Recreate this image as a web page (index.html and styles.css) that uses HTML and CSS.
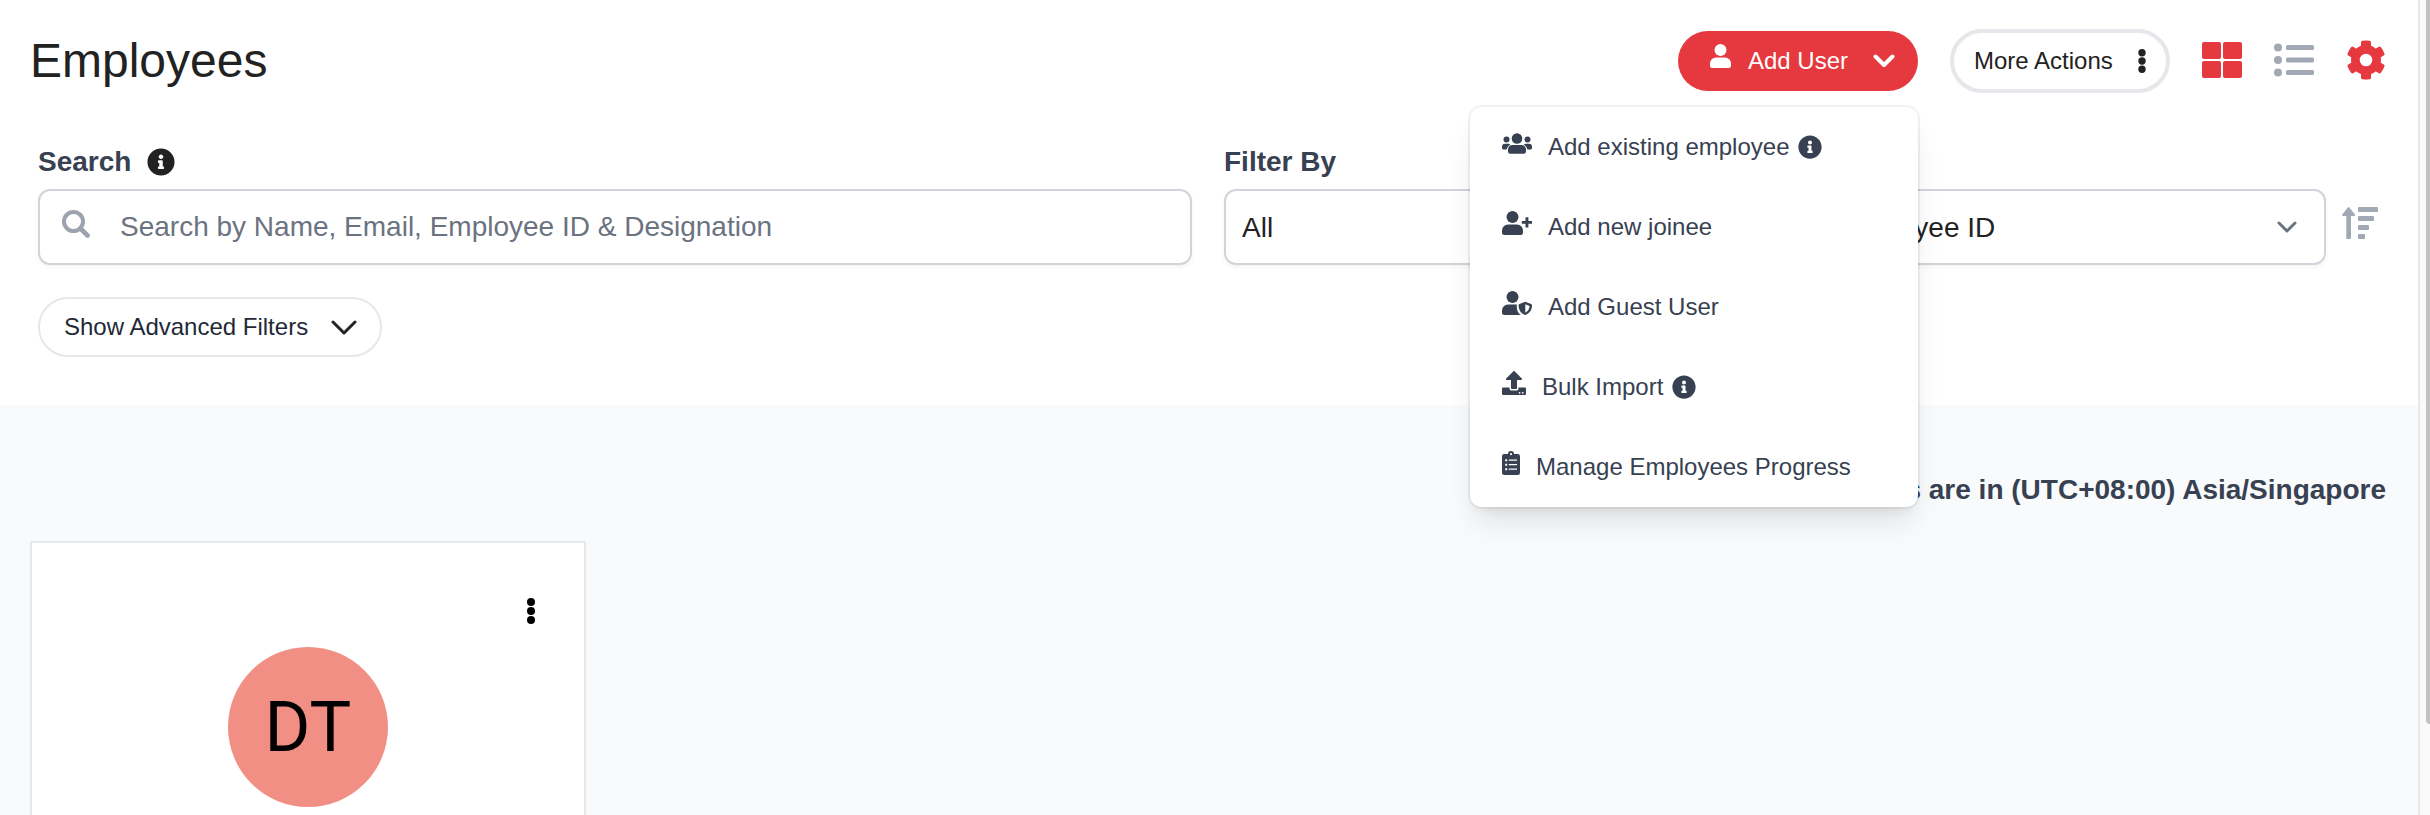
FILE: index.html
```html
<!DOCTYPE html>
<html lang="en">

<head>
    <meta charset="UTF-8">
    <title>Employees</title>
    <link rel="stylesheet" href="styles.css">
</head>
<body>
    <svg class="sprite" aria-hidden="true">
        <symbol id="info" viewBox="0 0 512 512">
            <path d="M256 8C119 8 8 119 8 256s111 248 248 248 248-111 248-248S393 8 256 8zm0 110c23.200 0 42 18.800 42 42s-18.800 42-42 42-42-18.800-42-42 18.800-42 42-42zm56 254c0 6.600-5.400 12-12 12h-88c-6.600 0-12-5.400-12-12v-24c0-6.600 5.400-12 12-12h12v-64h-12c-6.600 0-12-5.400-12-12v-24c0-6.600 5.400-12 12-12h64c6.600 0 12 5.400 12 12v100h12c6.600 0 12 5.400 12 12v24z"/>
        </symbol>
        <symbol id="dots" viewBox="0 0 8 26">
            <circle cx="4" cy="4" r="4"/><circle cx="4" cy="13" r="4"/><circle cx="4" cy="22" r="4"/>
        </symbol>
        <symbol id="chevron" viewBox="0 0 26 15">
            <path d="M2 2l11 11L24 2" fill="none" stroke="currentColor" stroke-width="3" stroke-linecap="round" stroke-linejoin="round"/>
        </symbol>
        <symbol id="chevron-small" viewBox="0 0 20 12">
            <path d="M2 2l8 8 8-8" fill="none" stroke="currentColor" stroke-width="3" stroke-linecap="round" stroke-linejoin="round"/>
        </symbol>
    </svg>

    <div class="page">
        <div class="content">
            <div class="top">
                <div class="header">
                    <h1>Employees</h1>
                    <div class="actions">
                        <div class="add">
                            <button class="btn btn-red" type="button">
                                <svg class="i-user" viewBox="0 0 21 24"><circle cx="10.500" cy="6" r="6"/><path d="M6 13.500h9a6 6 0 0 1 6 6v2.300A2.200 2.200 0 0 1 18.800 24H2.200A2.200 2.200 0 0 1 0 21.800v-2.300a6 6 0 0 1 6-6z"/></svg>
                                <span>Add User</span>
                                <svg class="i-down" viewBox="0 0 22 14"><path d="M2.500 2.500l8.500 8.500 8.500-8.500" fill="none" stroke="currentColor" stroke-width="4" stroke-linecap="round" stroke-linejoin="round"/></svg>
                            </button>
                            <div class="menu">
                                <a href="#">
                                    <svg class="w30" viewBox="0 0 30 24"><circle cx="15" cy="7.500" r="5.300"/><circle cx="4.500" cy="8.500" r="3"/><circle cx="25.500" cy="8.500" r="3"/><path d="M10.500 14h9a4.500 4.500 0 0 1 4.500 4.500v2a2.200 2.200 0 0 1-2.200 2.200H8.200A2.200 2.200 0 0 1 6 20.500v-2a4.500 4.500 0 0 1 4.500-4.500z"/><path d="M3 12.800h3c1 0 1.700.3 2.200.9A7 7 0 0 0 4.600 18.500H1.500A1.500 1.500 0 0 1 0 17v-1.200a3 3 0 0 1 3-3zM27 12.800h-3c-1 0-1.700.3-2.200.9a7 7 0 0 1 3.600 4.800h3.100A1.500 1.500 0 0 0 30 17v-1.200a3 3 0 0 0-3-3z"/></svg>
                                    <span>Add existing employee</span>
                                    <svg class="i-info"><use href="#info"/></svg>
                                </a>
                                <a href="#">
                                    <svg class="w30" viewBox="0 0 30 24"><circle cx="10.500" cy="6" r="6"/><path d="M6 13.500h9a6 6 0 0 1 6 6v2.300A2.200 2.200 0 0 1 18.800 24H2.200A2.200 2.200 0 0 1 0 21.800v-2.300a6 6 0 0 1 6-6z"/><path d="M23.500 6.200h2.900v3.700h3.600v2.900h-3.600v3.700h-2.900v-3.700h-3.700V9.900h3.700z"/></svg>
                                    <span>Add new joinee</span>
                                </a>
                                <a href="#">
                                    <svg class="w30" viewBox="0 0 30 24"><circle cx="10.500" cy="6" r="6"/><path d="M6 13.500h9.200l-.4.300v2.100c0 3 1.200 6.200 4 8.100H2.200A2.200 2.200 0 0 1 0 21.800v-2.300a6 6 0 0 1 6-6z"/><path fill-rule="evenodd" d="M23.200 10.700l5.900 2.400c.6.200.9.600.9 1.200 0 4.700-2.500 8-5.900 9.500-.6.200-1.100.2-1.700 0-3.500-1.500-5.800-5-5.800-9.500 0-.6.3-1 .9-1.200zM23.300 13.200v8.500c2.500-1.300 4.100-3.500 4.300-6.700z"/></svg>
                                    <span>Add Guest User</span>
                                </a>
                                <a href="#">
                                    <svg class="w24" viewBox="0 0 24 24"><path d="M13.900 18h-3.800c-.6 0-1.100-.5-1.100-1.100V9H4.900c-.8 0-1.300-1-.7-1.600L11.400.3c.3-.4.900-.4 1.200 0l7.200 7.100c.6.600.2 1.600-.7 1.600H15v7.900c0 .6-.5 1.100-1.100 1.100z"/><path fill-rule="evenodd" d="M7.500 16.500v.4a2.600 2.600 0 0 0 2.600 2.600h3.800a2.600 2.600 0 0 0 2.600-2.600v-.4h6.400c.6 0 1.100.5 1.100 1.100v5.300c0 .6-.5 1.100-1.100 1.100H1.100A1.100 1.100 0 0 1 0 22.900v-5.300c0-.6.5-1.100 1.100-1.100zM17.600 20.900a.9.900 0 1 0 0 1.800.9.900 0 0 0 0-1.800zM20.800 20.900a.9.900 0 1 0 0 1.800.9.900 0 0 0 0-1.800z"/></svg>
                                    <span>Bulk Import</span>
                                    <svg class="i-info"><use href="#info"/></svg>
                                </a>
                                <a href="#">
                                    <svg class="w18" viewBox="0 0 18 24"><path fill-rule="evenodd" d="M15.800 3H12a3 3 0 0 0-6 0H2.200A2.200 2.200 0 0 0 0 5.200v16.600A2.200 2.200 0 0 0 2.200 24h13.600a2.200 2.200 0 0 0 2.200-2.200V5.200A2.200 2.200 0 0 0 15.800 3zM9 2a1.100 1.100 0 1 1 0 2.200A1.100 1.100 0 0 1 9 2zM3.200 8.200h2v2h-2zM6.800 8.600H15v1.200H6.800zM3.200 12.700h2v2h-2zM6.800 13.100H15v1.200H6.800zM3.200 17.200h2v2h-2zM6.800 17.600H15v1.200H6.800z"/></svg>
                                    <span>Manage Employees Progress</span>
                                </a>
                            </div>
                        </div>
                        <button class="btn btn-more" type="button">
                            <span>More Actions</span>
                            <svg class="i-dots"><use href="#dots"/></svg>
                        </button>
                        <button class="icon red" type="button" aria-label="Grid view">
                            <svg width="40" height="36" viewBox="0 0 40 36"><rect width="19" height="17" rx="2"/><rect x="21" width="19" height="17" rx="2"/><rect y="19" width="19" height="17" rx="2"/><rect x="21" y="19" width="19" height="17" rx="2"/></svg>
                        </button>
                        <button class="icon grey" type="button" aria-label="List view">
                            <svg width="40" height="34" viewBox="0 0 40 34"><circle cx="4" cy="4.500" r="4"/><circle cx="4" cy="17" r="4"/><circle cx="4" cy="29.500" r="4"/><rect x="12" y="2" width="28" height="5" rx="1.500"/><rect x="12" y="14.500" width="28" height="5" rx="1.500"/><rect x="12" y="27" width="28" height="5" rx="1.500"/></svg>
                        </button>
                        <button class="icon red" type="button" aria-label="Settings">
                            <svg width="40" height="40" viewBox="0 0 40 40">
                                <path fill-rule="evenodd" d="M20 5a15 15 0 1 0 0 30 15 15 0 0 0 0-30zM20 13.700a6.300 6.300 0 1 1 0 12.600 6.300 6.300 0 0 1 0-12.600z"/>
                                <path id="tooth" d="M15 8V2.300Q15 .8 16.500.8Q20 .2 23.500.8Q25 .8 25 2.300V8z"/>
                                <use href="#tooth" transform="rotate(60 20 20)"/>
                                <use href="#tooth" transform="rotate(120 20 20)"/>
                                <use href="#tooth" transform="rotate(180 20 20)"/>
                                <use href="#tooth" transform="rotate(240 20 20)"/>
                                <use href="#tooth" transform="rotate(300 20 20)"/>
                            </svg>
                        </button>
                    </div>
                </div>

                <div class="filters">
                    <div class="field search">
                        <label for="search">Search <svg class="i-tip"><use href="#info"/></svg></label>
                        <div class="box">
                            <svg class="i-search" viewBox="0 0 28 28"><circle cx="11.500" cy="11.500" r="9.500" fill="none" stroke="currentColor" stroke-width="4"/><path d="M18.500 18.500l7 7" stroke="currentColor" stroke-width="4.600" stroke-linecap="round"/></svg>
                            <input type="text" id="search" placeholder="Search by Name, Email, Employee ID &amp; Designation">
                        </div>
                    </div>
                    <div class="field">
                        <label for="filter">Filter By</label>
                        <div class="box">
                            <select id="filter"><option>All</option></select>
                            <svg class="i-select"><use href="#chevron-small"/></svg>
                        </div>
                    </div>
                    <div class="field">
                        <label for="sort">Sort By</label>
                        <div class="sort">
                            <div class="box">
                                <select id="sort"><option>Employee ID</option></select>
                                <svg class="i-select"><use href="#chevron-small"/></svg>
                            </div>
                            <button class="icon grey" type="button" aria-label="Sort order">
                                <svg width="36" height="32" viewBox="0 0 36 32"><path d="M5.900.4a1 1 0 0 1 1.400 0l5.500 6.900c.6.700.1 1.700-.8 1.700H9v22a1 1 0 0 1-1 1H5.300a1 1 0 0 1-1-1V9H1.200C.3 9-.2 8 .4 7.300z"/><rect x="16" width="20" height="5" rx="1"/><rect x="16" y="9" width="16" height="5" rx="1"/><rect x="16" y="18" width="11" height="5" rx="1"/><rect x="16" y="27" width="7" height="5" rx="1"/></svg>
                            </button>
                        </div>
                    </div>
                </div>

                <button class="btn btn-adv" type="button">
                    <span>Show Advanced Filters</span>
                    <svg class="i-adv"><use href="#chevron"/></svg>
                </button>
            </div>

            <p class="zone">All times are in (UTC+08:00) Asia/Singapore</p>

            <div class="cards">
                <div class="card">
                    <button class="icon dots" type="button" aria-label="Employee actions">
                        <svg width="8" height="26"><use href="#dots"/></svg>
                    </button>
                    <div class="avatar">DT</div>
                </div>
            </div>
        </div>
        <div class="scrollbar"><div class="thumb"></div></div>
    </div>
</body>

</html>
```

FILE: styles.css
```css
* {
    box-sizing: border-box;
    margin: 0;
    padding: 0;
}

body {
    font-family: "Liberation Sans", Arial, sans-serif;
    font-size: 24px;
    color: #222;
    background: #fff;
    overflow: hidden;
}

svg {
    display: block;
    flex-shrink: 0;
    fill: currentColor;
}

button,
input,
select {
    font: inherit;
    color: inherit;
    background: none;
    border: 0;
    outline: 0;
}

.sprite {
    position: absolute;
    width: 0;
    height: 0;
}

.page {
    display: flex;
    height: 100vh;
}

.content {
    flex: 1;
    overflow: hidden;
    background: #f8fafc;
}

.top {
    padding: 29px 40px 48px 38px;
    background: #fff;
}

/* header */
.header {
    display: flex;
    align-items: center;
    justify-content: space-between;
    height: 64px;
    margin: 0 -8px 0 -8px;
}

h1 {
    font-size: 48px;
    font-weight: normal;
    line-height: 64px;
}

.actions {
    display: flex;
    align-items: center;
    gap: 32px;
}

.actions .icon {
    margin-bottom: 2px;
}

.btn {
    display: flex;
    align-items: center;
    height: 60px;
    border-radius: 32px;
}

.btn-red {
    gap: 17px;
    width: 240px;
    padding: 0 22px 0 32px;
    color: #fff;
    background: #e5393f;
}

.add .btn-red {
    margin-bottom: 1px;
}

.i-user {
    width: 21px;
    height: 24px;
    margin-bottom: 10px;
}

.i-down {
    width: 22px;
    height: 14px;
    margin-left: 8px;
}

.btn-more {
    justify-content: space-between;
    width: 220px;
    height: 64px;
    padding: 0 20px;
    border: 4px solid #e5e7eb;
}

.i-dots {
    width: 8px;
    height: 24px;
}

.icon {
    display: flex;
}

.red {
    color: #e5393f;
}

.grey {
    color: #a3a9b4;
}

/* dropdown under Add User */
.add {
    position: relative;
}

.menu {
    position: absolute;
    z-index: 5;
    top: 76px;
    right: 0;
    width: 448px;
    border-radius: 12px;
    color: #374151;
    background: #fff;
    box-shadow: 0 0 0 2px rgba(0, 0, 0, 0.05), 0 20px 30px -6px rgba(0, 0, 0, 0.1), 0 8px 12px -4px rgba(0, 0, 0, 0.06);
}

.menu a {
    display: flex;
    align-items: center;
    height: 80px;
    padding: 0 32px;
    color: inherit;
    text-decoration: none;
}

.menu span {
    margin: 0 9px 0 16px;
}

.menu .w30,
.menu .w24,
.menu .w18 {
    height: 24px;
    margin-bottom: 8px;
}

.w30 {
    width: 30px;
}

.w24 {
    width: 24px;
}

.w18 {
    width: 18px;
}

.i-info {
    width: 24px;
    height: 24px;
}

/* filters */
.filters {
    display: grid;
    grid-template-columns: repeat(4, 1fr);
    gap: 32px;
    margin-top: 49px;
}

.search {
    grid-column: span 2;
}

label {
    display: flex;
    align-items: center;
    height: 40px;
    margin-bottom: 7px;
    font-size: 28px;
    font-weight: bold;
    color: #374151;
}

.i-tip {
    width: 28px;
    height: 28px;
    margin-left: 16px;
    color: #222;
}

.box {
    display: flex;
    align-items: center;
    flex: 1;
    height: 76px;
    border: 2px solid #d1d5db;
    border-radius: 12px;
    background: #fff;
    box-shadow: 0 2px 4px rgba(0, 0, 0, 0.05);
    font-size: 28px;
}

.i-search {
    width: 28px;
    height: 28px;
    margin: 0 30px 6px 22px;
    color: #9ca3af;
}

.box input {
    flex: 1;
    height: 100%;
}

.box input::placeholder {
    color: #6b7280;
    opacity: 1;
}

.box select {
    flex: 1;
    height: 100%;
    padding-left: 16px;
    appearance: none;
}

.i-select {
    width: 20px;
    height: 12px;
    margin-right: 27px;
    color: #6b7280;
}

.sort {
    display: flex;
    align-items: center;
    gap: 16px;
}

.sort .icon {
    margin-bottom: 8px;
}

.btn-adv {
    gap: 23px;
    margin-top: 32px;
    padding: 0 23px 0 24px;
    border: 2px solid #e5e7eb;
    color: #1f2937;
}

.i-adv {
    width: 26px;
    height: 15px;
    color: #222;
}

/* list of employees */
.zone {
    padding: 69px 32px 0;
    font-size: 28px;
    font-weight: bold;
    line-height: 32px;
    text-align: right;
    color: #374151;
}

.cards {
    display: grid;
    grid-template-columns: repeat(4, 1fr);
    gap: 45px;
    padding: 35px 30px;
}

.card {
    display: flex;
    flex-direction: column;
    align-items: center;
    height: 480px;
    padding-top: 55px;
    border: 2px solid #e5e7eb;
    background: #fff;
}

.dots {
    align-self: flex-end;
    margin-right: 49px;
    color: #000;
}

.avatar {
    width: 160px;
    height: 160px;
    margin-top: 23px;
    border-radius: 50%;
    font-family: Roboto, sans-serif;
    font-size: 70px;
    line-height: 160px;
    text-align: center;
    color: #000;
    background: #f28f84;
}

.scrollbar {
    width: 12px;
    padding-left: 6px;
    border-left: 2px solid #e8e8e8;
    background: #fafafa;
}

.thumb {
    height: 724px;
    border-bottom-left-radius: 6px;
    background: #c1c1c1;
}
```
